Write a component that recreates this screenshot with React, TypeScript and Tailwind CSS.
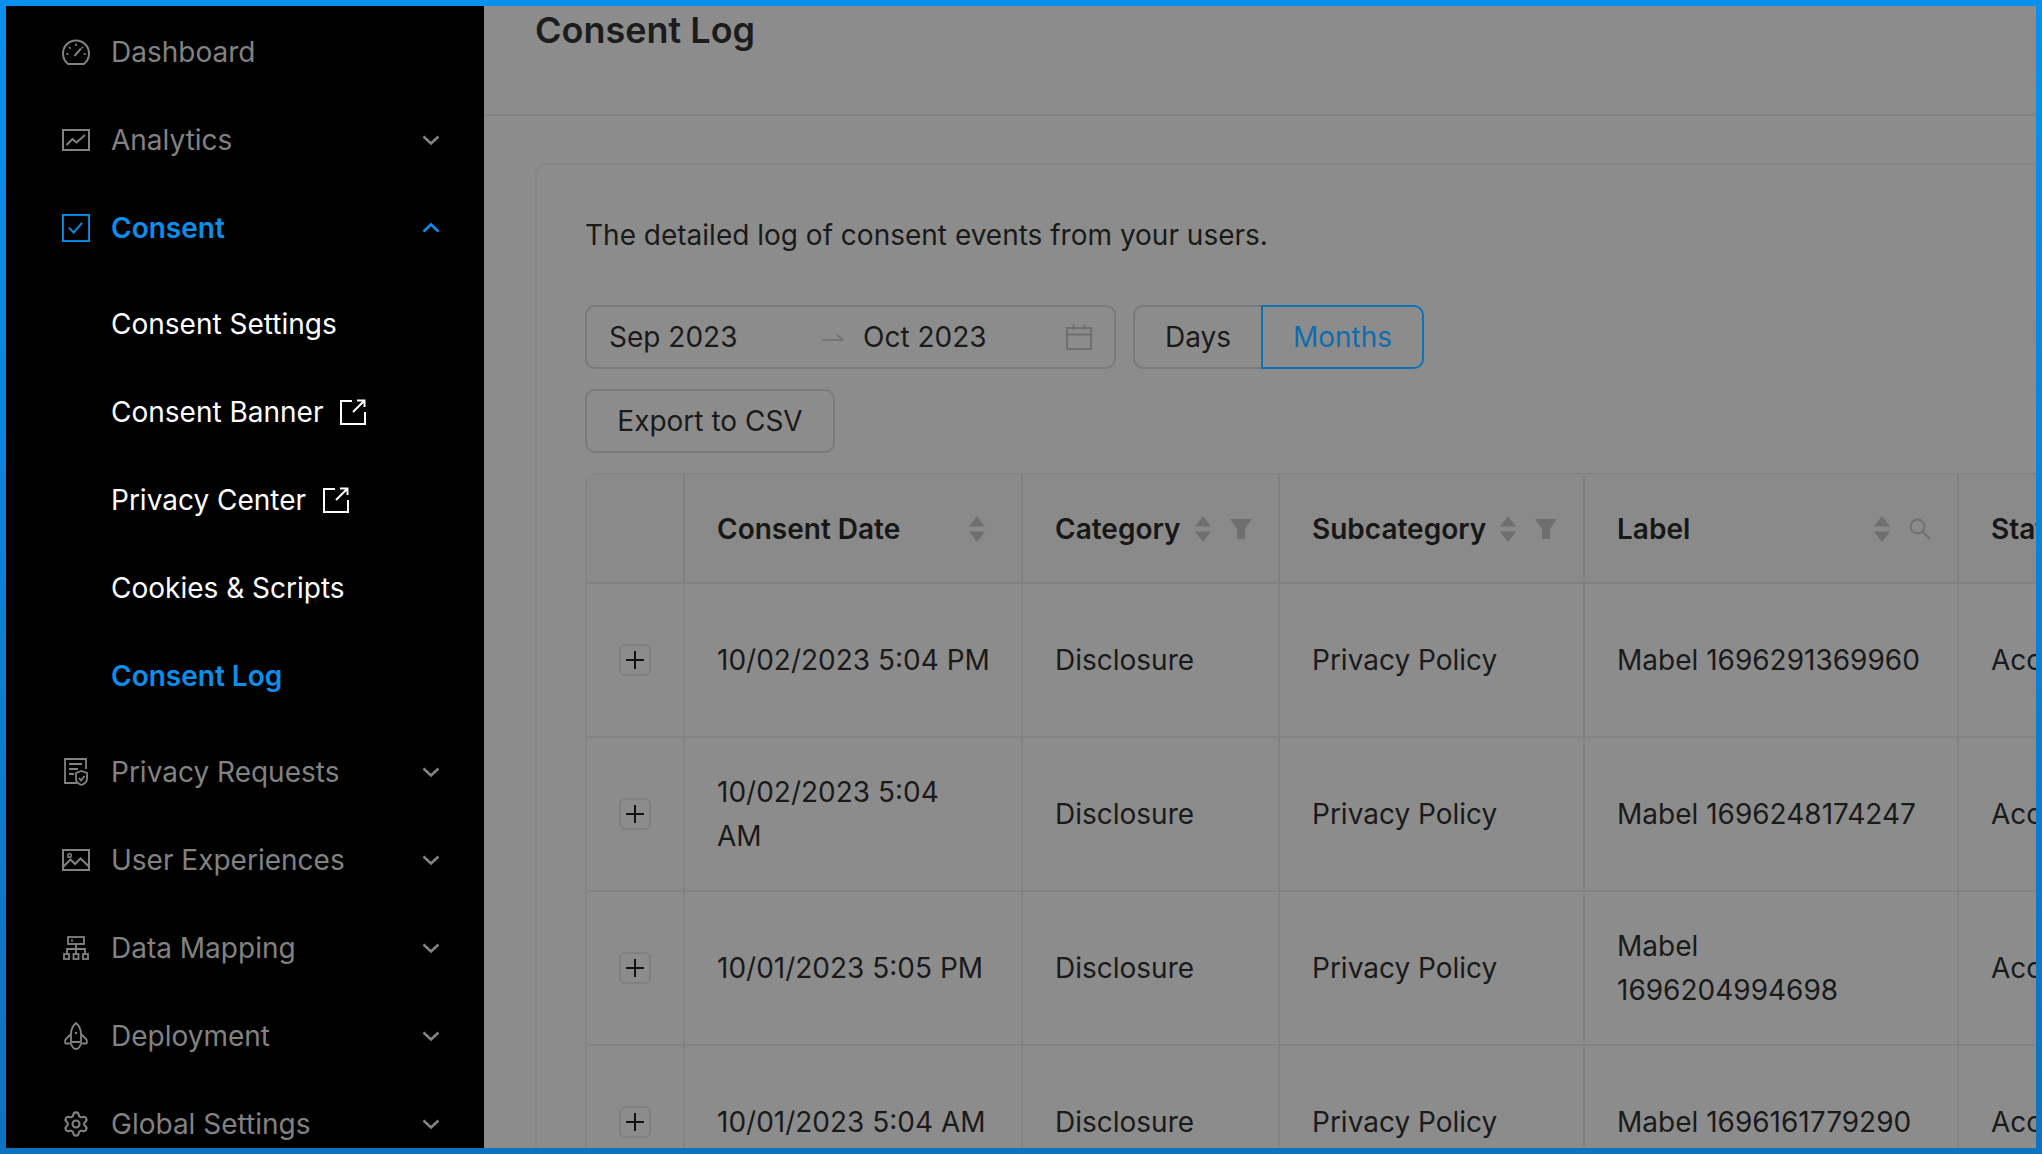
import type { ReactNode } from 'react'
import { Settings } from 'lucide-react'

const font = { inter: 'font-[Inter,sans-serif]' }

const GaugeIcon = () => (
  <svg width="28" height="26" viewBox="0 0 28 26" fill="none" stroke="currentColor" strokeWidth="2">
    <path d="M6 25 C3 22.5 1 19 1 14.5 A13 13 0 0 1 27 14.5 C27 19 25 22.5 22 25 Z" strokeLinejoin="round" />
    <path d="M12.5 17 L19 9.5" />
    <path d="M14 4.5 V7 M7 8 L8.7 9.7 M4 15 H6.5 M21.5 15 H24 M21 8 L19.8 9.2" strokeWidth="1.6" />
  </svg>
)

const ChartIcon = () => (
  <svg width="28" height="22" viewBox="0 0 28 22" fill="none" stroke="currentColor" strokeWidth="2">
    <rect x="1" y="1" width="26" height="20" />
    <path d="M4.5 16 L10.5 10 L14.5 13.5 L23 6" />
  </svg>
)

const CheckBoxIcon = () => (
  <svg width="30" height="30" viewBox="0 0 30 30" fill="none" stroke="currentColor" strokeWidth="2">
    <rect x="1" y="1" width="28" height="28" />
    <path d="M7.5 14.5 L12.5 20 L21.5 9.5" />
  </svg>
)

const PrivacyIcon = () => (
  <svg width="24" height="28" viewBox="0 0 24 28" fill="none" stroke="currentColor" strokeWidth="1.8">
    <path d="M13 25 H1 V1 H22 V11" />
    <path d="M5 6 H18 M5 11 H14 M5 16 H10" />
    <path d="M17.5 13 L23 15 V21 C23 24 20 26 17.5 27 C15 26 12 24 12 21 V15 Z" fill="#000" />
    <path d="M15 20 L17 22.5 L20.5 18" />
  </svg>
)

const ImageIcon = () => (
  <svg width="28" height="22" viewBox="0 0 28 22" fill="none" stroke="currentColor" strokeWidth="2">
    <rect x="1" y="1" width="26" height="20" />
    <circle cx="7.5" cy="6.5" r="1.8" strokeWidth="1.5" />
    <path d="M1.5 17.5 L8.5 10.5 L13 15 L18.5 9.5 L26.5 17" />
  </svg>
)

const TreeIcon = () => (
  <svg width="26" height="24" viewBox="0 0 26 24" fill="none" stroke="currentColor" strokeWidth="1.8">
    <rect x="5" y="1" width="16" height="7" />
    <path d="M13 8 V18 M4 18 V13 H22 V18" />
    <rect x="1" y="18" width="5" height="5" />
    <rect x="10.5" y="18" width="5" height="5" />
    <rect x="20" y="18" width="5" height="5" />
    <path d="M8 4.5 H10" />
  </svg>
)

const RocketIcon = () => (
  <svg width="24" height="28" viewBox="0 0 24 28" fill="none" stroke="currentColor" strokeWidth="1.8">
    <path d="M12 1 C15.5 4 17 8 17 12 V20 H7 V12 C7 8 8.5 4 12 1 Z" strokeLinejoin="round" />
    <path d="M7 12 L2 17 C1 18 1 20 1.5 21.5 H7 M17 12 L22 17 C23 18 23 20 22.5 21.5 H17" />
    <path d="M7 21.5 C8 25 10 27 12 27 C14 27 16 25 17 21.5" />
    <circle cx="12" cy="11" r="1.2" fill="currentColor" stroke="none" />
  </svg>
)

const ExternalIcon = () => (
  <svg width="26" height="26" viewBox="0 0 26 26" fill="none" stroke="currentColor" strokeWidth="2" className="ml-[17px]">
    <path d="M12 2 H1 V25 H25 V13" />
    <path d="M13 13 L24.5 1.5 M17 1.5 H24.5 V8" />
  </svg>
)

const Chevron = ({ up }: { up?: boolean }) => (
  <svg width="18" height="12" viewBox="0 0 18 12" fill="none" stroke="currentColor" strokeWidth="2.6" className={up ? 'rotate-180' : ''}>
    <path d="M1.5 2.5 L9 9.5 L16.5 2.5" />
  </svg>
)

const Carets = () => (
  <svg width="16" height="26" viewBox="0 0 16 26" fill="#6f6f6f" className="shrink-0">
    <path d="M8 0 L16 10.5 H0 Z" />
    <path d="M8 26 L16 15.5 H0 Z" />
  </svg>
)

const Funnel = () => (
  <svg width="22" height="20" viewBox="0 0 22 20" fill="#6f6f6f" className="shrink-0">
    <path d="M0 0 H22 L15 10 V20 H7 V10 Z" />
  </svg>
)

const SearchGlyph = () => (
  <svg width="22" height="22" viewBox="0 0 22 22" fill="none" stroke="#707070" strokeWidth="1.8" className="shrink-0">
    <circle cx="8.5" cy="8.5" r="7" />
    <path d="M13.5 13.5 L21 21" />
  </svg>
)

const CalendarIcon = () => (
  <svg width="26" height="26" viewBox="0 0 26 26" fill="none" stroke="#6f6f6f" strokeWidth="2">
    <rect x="1" y="4" width="24" height="21" />
    <path d="M1 10.5 H25 M7.5 0.5 V6 M18.5 0.5 V6" />
  </svg>
)

const NavRow: React.FC<{
  icon: ReactNode
  label: string
  active?: boolean
  open?: boolean
  noChevron?: boolean
}> = ({ icon, label, active, open, noChevron }) => (
  <div className={`flex h-[88px] items-center pl-[56px] pr-[44px] ${active ? 'text-[#0b8fec]' : 'text-[#828282]'}`}>
    <span className="flex w-[49px] shrink-0 pr-[21px] justify-center">{icon}</span>
    <span className={`flex-1 text-[28px] leading-[44px] ${active ? 'font-semibold' : ''}`}>{label}</span>
    {!noChevron && <Chevron up={open} />}
  </div>
)

const SubRow: React.FC<{ label: string; active?: boolean; external?: boolean }> = ({ label, active, external }) => (
  <div className={`flex h-[88px] items-center pl-[105px] text-[28px] leading-[44px] ${active ? 'font-semibold text-[#0b8fec]' : 'text-white'}`}>
    <span>{label}</span>
    {external && <ExternalIcon />}
  </div>
)

const Sidebar = () => (
  <aside className="h-full w-[478px] shrink-0 overflow-hidden bg-black pt-[2px]">
    <NavRow icon={<GaugeIcon />} label="Dashboard" noChevron />
    <NavRow icon={<ChartIcon />} label="Analytics" />
    <NavRow icon={<CheckBoxIcon />} label="Consent" active open />
    <div className="py-[8px]">
      <SubRow label="Consent Settings" />
      <SubRow label="Consent Banner" external />
      <SubRow label="Privacy Center" external />
      <SubRow label="Cookies & Scripts" />
      <SubRow label="Consent Log" active />
    </div>
    <NavRow icon={<PrivacyIcon />} label="Privacy Requests" />
    <NavRow icon={<ImageIcon />} label="User Experiences" />
    <NavRow icon={<TreeIcon />} label="Data Mapping" />
    <NavRow icon={<RocketIcon />} label="Deployment" />
    <NavRow icon={<Settings size={28} strokeWidth={1.8} />} label="Global Settings" />
  </aside>
)

const HeadCell: React.FC<{ label?: string; filter?: 'funnel' | 'search'; last?: boolean }> = ({ label, filter, last }) => (
  <th className={`border-b-2 border-[#808080] bg-[#8a8a8a] p-0 text-left ${last ? '' : 'border-r-2'}`}>
    {label && (
      <div className={`flex items-center pl-[32px] ${filter ? 'pr-[26px]' : 'pr-[36px]'}`}>
        <span className="flex-1 whitespace-nowrap text-[28px] font-semibold leading-[44px] text-[#171717]">{label}</span>
        {!last && <Carets />}
        {filter === 'funnel' && <span className="ml-[19px]"><Funnel /></span>}
        {filter === 'search' && <span className="ml-[19px]"><SearchGlyph /></span>}
      </div>
    )}
  </th>
)

const rows = [
  { date: '10/02/2023 5:04 PM', label: 'Mabel 1696291369960' },
  { date: '10/02/2023 5:04\nAM', label: 'Mabel 1696248174247' },
  { date: '10/01/2023 5:05 PM', label: 'Mabel\n1696204994698' },
  { date: '10/01/2023 5:04 AM', label: 'Mabel 1696161779290' },
]

const bodyCell = 'border-b-2 border-r-2 border-[#838383] p-0 pl-[32px] text-[28px] leading-[44px] text-[#1a1a1a] whitespace-pre-line'

const LogTable = () => (
  <table className="mt-[20px] w-[1700px] table-fixed border-separate border-spacing-0 rounded-t-[12px] border-l-2 border-t-2 border-[#838383]">
    <colgroup>
      <col className="w-[98px]" />
      <col className="w-[338px]" />
      <col className="w-[257px]" />
      <col className="w-[305px]" />
      <col className="w-[374px]" />
      <col className="w-[328px]" />
    </colgroup>
    <thead>
      <tr className="h-[109px]">
        <HeadCell />
        <HeadCell label="Consent Date" />
        <HeadCell label="Category" filter="funnel" />
        <HeadCell label="Subcategory" filter="funnel" />
        <HeadCell label="Label" filter="search" />
        <HeadCell label="Status" last />
      </tr>
    </thead>
    <tbody>
      {rows.map((row) => (
        <tr key={row.label} className="h-[154px]">
          <td className="border-b-2 border-r-2 border-[#838383] p-0">
            <button className="mx-auto flex size-[32px] items-center justify-center rounded-[6px] border-2 border-[#808080] text-[#111]">
              <svg width="18" height="18" viewBox="0 0 18 18" stroke="currentColor" strokeWidth="2">
                <path d="M9 0 V18 M0 9 H18" />
              </svg>
            </button>
          </td>
          <td className={bodyCell}>{row.date}</td>
          <td className={bodyCell}>Disclosure</td>
          <td className={bodyCell}>Privacy Policy</td>
          <td className={bodyCell}>{row.label}</td>
          <td className={bodyCell}>Accepted</td>
        </tr>
      ))}
    </tbody>
  </table>
)

export default function App() {
  return (
    <div className={`h-screen w-screen overflow-hidden bg-gradient-to-b from-[#0a90ef] to-[#0d72c0] p-[6px] ${font.inter}`}>
      <div className="flex h-full w-full overflow-hidden bg-[#8c8c8c]">
        <Sidebar />
        <main className="min-w-0 flex-1 overflow-hidden">
          <header className="h-[110px] border-b-2 border-[#838383] pl-[51px]">
            <h1 className="text-[36px] font-semibold leading-[48px] text-[#1c1c1c]">Consent Log</h1>
          </header>
          <section className="ml-[51px] mt-[47px] w-[1800px] rounded-t-[12px] border-l-2 border-t-2 border-[#868686] pl-[48px] pt-[48px]">
            <p className="text-[28px] leading-[44px] text-[#1a1a1a]">The detailed log of consent events from your users.</p>
            <div className="mt-[48px] flex items-center">
              <div className="flex h-[64px] w-[531px] items-center rounded-[10px] border-2 border-[#7a7a7a] pl-[22px] pr-[22px] text-[28px] text-[#1a1a1a]">
                <span className="w-[213px]">Sep 2023</span>
                <svg width="22" height="10" viewBox="0 0 22 10" fill="none" stroke="#6f6f6f" strokeWidth="1.6">
                  <path d="M0 8 H21 L14 2" />
                </svg>
                <span className="ml-[19px] flex-1">Oct 2023</span>
                <CalendarIcon />
              </div>
              <button className="ml-[17px] h-[64px] w-[128px] rounded-l-[10px] border-2 border-r-0 border-[#7a7a7a] text-[28px] text-[#1a1a1a]">Days</button>
              <button className="h-[64px] w-[163px] rounded-r-[10px] border-2 border-[#1171b8] text-[28px] text-[#0f6cb0]">Months</button>
            </div>
            <button className="mt-[20px] block h-[64px] w-[250px] rounded-[10px] border-2 border-[#7a7a7a] text-[28px] text-[#1a1a1a]">Export to CSV</button>
            <LogTable />
          </section>
        </main>
      </div>
    </div>
  )
}
